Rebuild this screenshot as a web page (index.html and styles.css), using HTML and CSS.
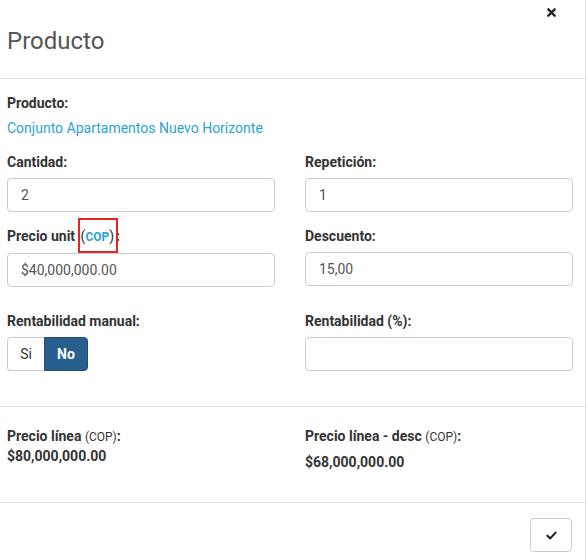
FILE: index.html
```html
<!DOCTYPE html>
<html lang="es">
<head>
<meta charset="utf-8">
<title>Producto</title>
<link rel="stylesheet" href="styles.css">
</head>
<body>
<div class="modal">
  <div class="modal-header">
    <h4 class="title">Producto</h4>
    <span class="close">
      <svg width="9" height="9" viewBox="0 0 10 10"><path d="M1.5 1.5 L8.5 8.5 M8.5 1.5 L1.5 8.5" stroke="#222" stroke-width="2.6" stroke-linecap="round"/></svg>
    </span>
  </div>
  <div class="modal-body">
    <div class="label">Producto:</div>
    <div class="link">Conjunto Apartamentos Nuevo Horizonte</div>
    <div class="grid">
      <div class="field">
        <div class="label">Cantidad:</div>
        <div class="input">2</div>
      </div>
      <div class="field">
        <div class="label">Repetición:</div>
        <div class="input">1</div>
      </div>
      <div class="field">
        <div class="label">Precio unit <span class="mark">(<span class="cop-blue">COP</span>)</span>:</div>
        <div class="input">$40,000,000.00</div>
      </div>
      <div class="field">
        <div class="label">Descuento:</div>
        <div class="input">15,00</div>
      </div>
      <div class="field field-wide">
        <div class="label">Rentabilidad manual:</div>
        <div class="btn-group">
          <span class="btn-si">Si</span>
          <span class="btn-no">No</span>
        </div>
      </div>
      <div class="field field-wide">
        <div class="label">Rentabilidad (%):</div>
        <div class="input"></div>
      </div>
    </div>
  </div>
  <div class="totals">
    <div class="total">
      <div class="label">Precio línea <span class="cop">(COP)</span>:</div>
      <div class="value">$80,000,000.00</div>
    </div>
    <div class="total">
      <div class="label">Precio línea - desc <span class="cop">(COP)</span>:</div>
      <div class="value value-low">$68,000,000.00</div>
    </div>
  </div>
  <div class="modal-footer">
    <span class="btn-ok">
      <svg width="11" height="9" viewBox="0 0 12 10"><path d="M1.5 5.2 L4.6 8.2 L10.5 1.8" fill="none" stroke="#222" stroke-width="2.4" stroke-linecap="round" stroke-linejoin="round"/></svg>
    </span>
  </div>
</div>
</body>
</html>
```
FILE: styles.css
```css
html, body {
  margin: 0;
  padding: 0;
  background: #fff;
}
body {
  font-family: Roboto, "Liberation Sans", Arial, sans-serif;
  font-size: 14px;
  color: #333;
}
.modal {
  width: 585px;
  height: 560px;
  border-right: 1px solid #e3e3e3;
  box-sizing: content-box;
}
.modal-header {
  position: relative;
  height: 78px;
  border-bottom: 1px solid #e5e5e5;
  padding: 0 7px;
  display: flex;
  align-items: center;
}
.title {
  margin: 0;
  font-size: 24px;
  font-weight: 400;
  color: #555;
  line-height: 30px;
  padding-top: 3px;
}
.close {
  position: absolute;
  right: 29px;
  top: 8px;
  display: flex;
}
.modal-body {
  padding: 14px 7px 35px 7px;
  border-bottom: 1px solid #e5e5e5;
}
.label {
  font-weight: 700;
  line-height: 20px;
  color: #333;
}
.link {
  color: #2aa3d8;
  line-height: 20px;
  margin-top: 5px;
}
.grid {
  display: grid;
  grid-template-columns: 268px 268px;
  column-gap: 30px;
  row-gap: 14px;
  margin-top: 14px;
}
.field-wide {
  margin-top: 10px;
}
.field .label {
  margin-bottom: 6px;
}
.input {
  height: 34px;
  box-sizing: border-box;
  border: 1px solid #ccc;
  border-radius: 4px;
  padding: 0 13px;
  line-height: 32px;
  color: #555;
}
.mark {
  font-weight: 400;
  outline: 2px solid #e32424;
  outline-offset: 0;
  padding: 8px 2px 7px 1px;
  margin-left: 1px;
}
.cop-blue {
  color: #2aa3d8;
  font-weight: 700;
  font-size: 12px;
}
.cop {
  font-weight: 400;
  font-size: 12px;
}
.btn-group {
  display: flex;
  height: 34px;
}
.btn-si, .btn-no {
  box-sizing: border-box;
  height: 34px;
  display: flex;
  align-items: center;
  justify-content: center;
}
.btn-si {
  width: 37px;
  border: 1px solid #ccc;
  border-right: none;
  border-radius: 4px 0 0 4px;
  color: #333;
}
.btn-no {
  width: 44px;
  background: #285f8f;
  border: 1px solid #204d74;
  border-radius: 0 4px 4px 0;
  color: #fff;
  font-weight: 700;
}
.totals {
  display: grid;
  grid-template-columns: 268px 268px;
  column-gap: 30px;
  padding: 19px 7px 0 7px;
  height: 76px;
  border-bottom: 1px solid #e5e5e5;
}
.value {
  font-weight: 700;
  line-height: 20px;
  margin-top: -1px;
}
.value-low {
  margin-top: 5px;
}
.modal-footer {
  display: flex;
  justify-content: flex-end;
  padding: 15px 13px 0 0;
}
.btn-ok {
  width: 42px;
  height: 34px;
  box-sizing: border-box;
  border: 1px solid #ccc;
  border-radius: 4px;
  display: flex;
  align-items: center;
  justify-content: center;
}
```
